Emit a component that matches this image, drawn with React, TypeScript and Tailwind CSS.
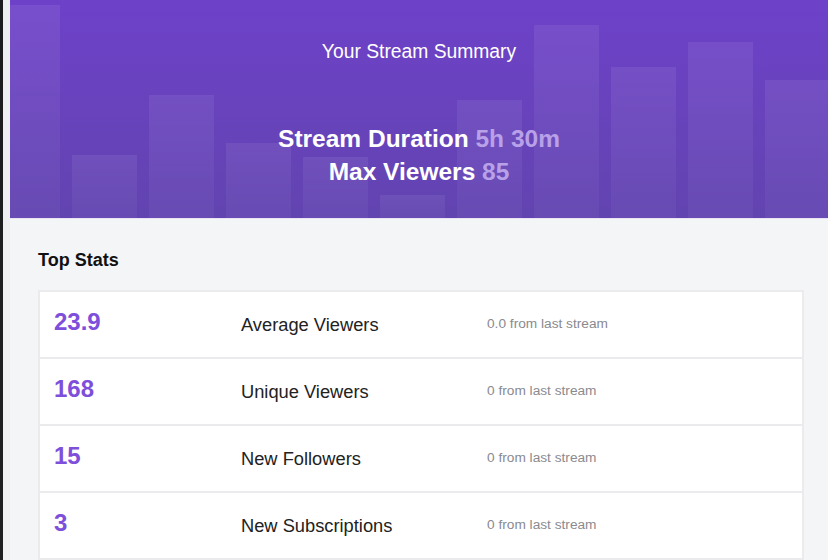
const bars = [213, 63, 123, 75, 61, 23, 118, 193, 151, 176, 138];

const stats = [
  { value: '23.9', label: 'Average Viewers', delta: '0.0 from last stream' },
  { value: '168', label: 'Unique Viewers', delta: '0 from last stream' },
  { value: '15', label: 'New Followers', delta: '0 from last stream' },
  { value: '3', label: 'New Subscriptions', delta: '0 from last stream' },
];

function BarBackdrop() {
  return (
    <svg className="absolute inset-0" width="818" height="218" viewBox="0 0 818 218">
      <defs>
        <linearGradient id="bar" x1="0" y1="0" x2="0" y2="1">
          <stop offset="0%" stopColor="#ffffff" stopOpacity="0.07" />
          <stop offset="100%" stopColor="#ffffff" stopOpacity="0.035" />
        </linearGradient>
      </defs>
      {bars.map((h, i) => (
        <rect key={i} x={-15 + i * 77} y={218 - h} width="65" height={h} fill="url(#bar)" />
      ))}
    </svg>
  );
}

export default function App() {
  return (
    <div className="flex h-[560px] w-[828px] overflow-hidden bg-[#f4f5f7] font-['Liberation_Sans',Arial,sans-serif]">
      <div className="w-[3px] shrink-0 bg-[#1d1d1f]" />
      <div className="w-[7px] shrink-0 bg-[#efeff1]" />

      <div className="flex min-w-0 flex-1 flex-col">
        {/* Summary header */}
        <header className="relative h-[219px] shrink-0 overflow-hidden border-b border-[#e8e4f4] bg-gradient-to-b from-[#6e41c9] to-[#6244b0]">
          <BarBackdrop />
          <div className="relative flex flex-col items-center pt-[41px] text-white">
            <h1 className="text-[19.3px] leading-[22px]">Your Stream Summary</h1>
            <div className="mt-[59px] flex flex-col items-center text-[24.5px] font-bold leading-[33px]">
              <p>
                Stream Duration <span className="text-[#b8a1e8]">5h 30m</span>
              </p>
              <p>
                Max Viewers <span className="text-[#b8a1e8]">85</span>
              </p>
            </div>
          </div>
        </header>

        {/* Top stats */}
        <section className="pl-[28px] pt-[30px]">
          <h2 className="text-[18px] font-bold leading-[22px] text-[#111]">Top Stats</h2>
          <div className="mt-[19px] w-[766px] border-2 border-b-0 border-[#ebebed] bg-white">
            {stats.map((s) => (
              <div key={s.label} className="flex h-[67px] items-center border-b-2 border-[#ebebed] pl-[14px]">
                <span className="mb-[5px] w-[187px] text-[24px] font-bold text-[#7d4fdb]">{s.value}</span>
                <span className="w-[246px] text-[18.3px] text-[#222]">{s.label}</span>
                <span className="text-[13.7px] text-[#8a8a8f]">{s.delta}</span>
              </div>
            ))}
          </div>
        </section>
      </div>
    </div>
  );
}
